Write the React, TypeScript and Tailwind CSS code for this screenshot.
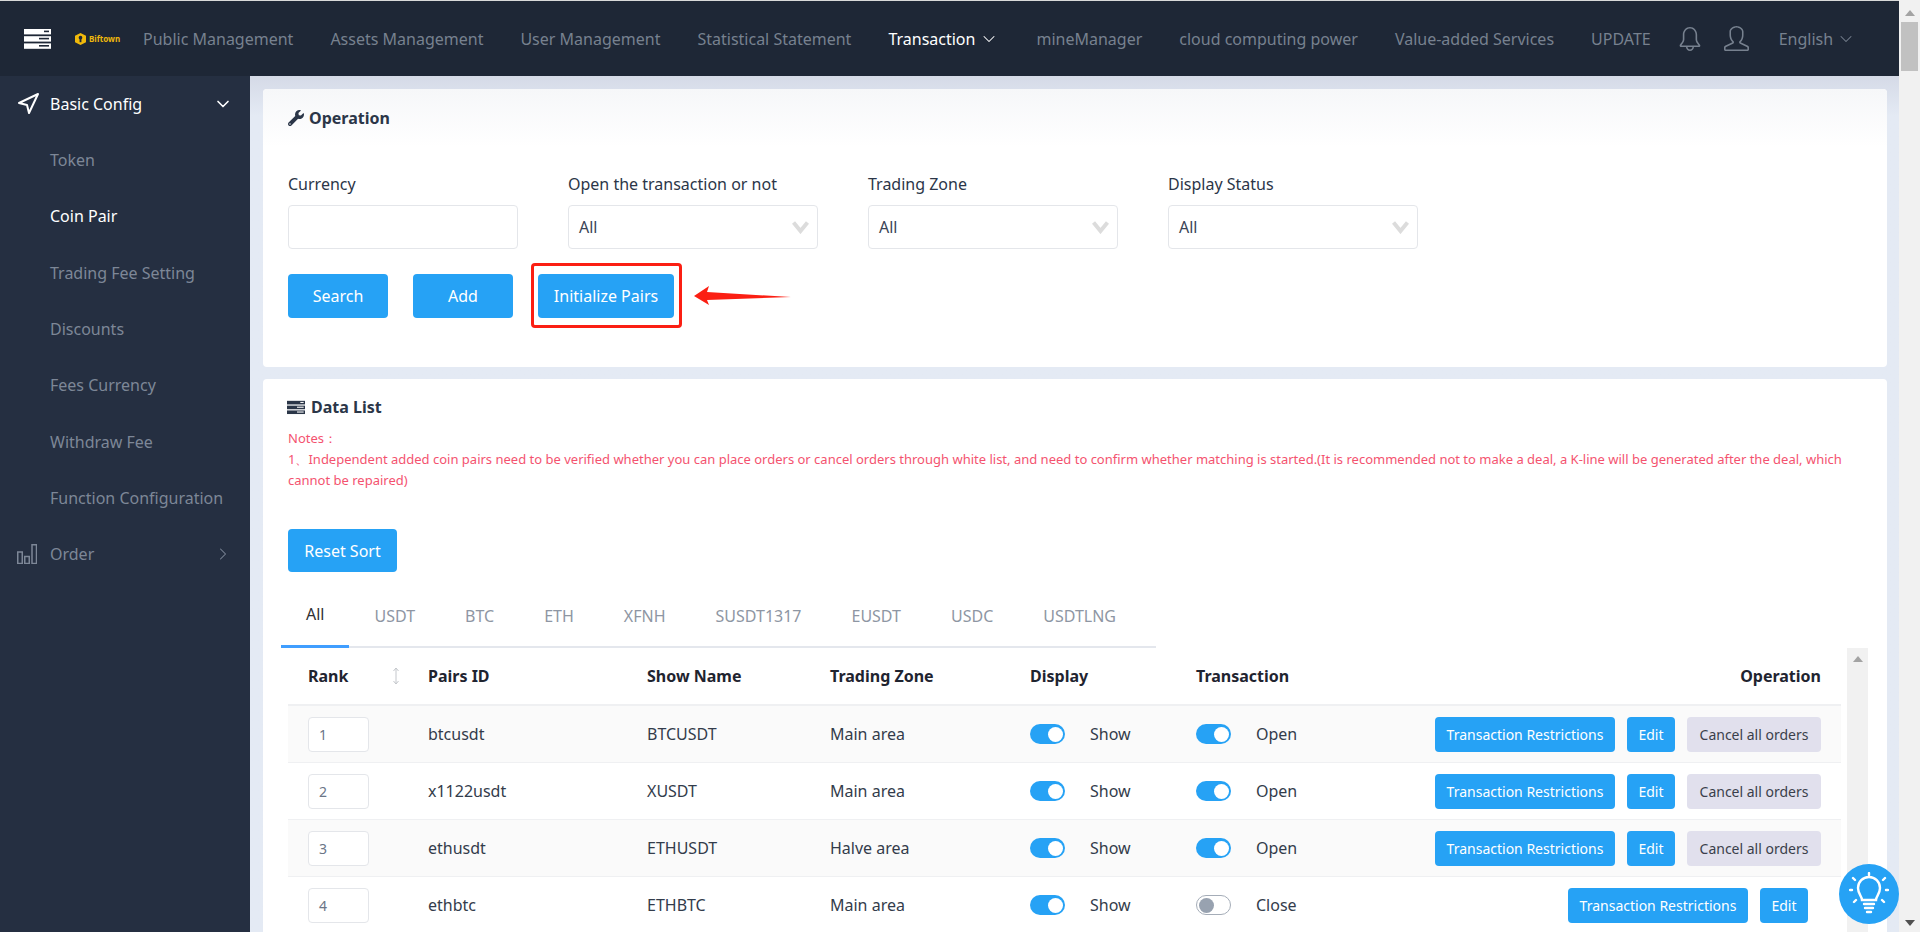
import { Bell, ChevronDown, ChevronRight, Navigation } from "lucide-react";
import { FaWrench } from "react-icons/fa";
import { SlBell, SlUser } from "react-icons/sl";

const navItems = [
  "Public Management",
  "Assets Management",
  "User Management",
  "Statistical Statement",
];

const navItems2 = ["mineManager", "cloud computing power", "Value-added Services", "UPDATE"];

const sideItems = [
  "Token",
  "Coin Pair",
  "Trading Fee Setting",
  "Discounts",
  "Fees Currency",
  "Withdraw Fee",
  "Function Configuration",
];

const tabs = ["All", "USDT", "BTC", "ETH", "XFNH", "SUSDT1317", "EUSDT", "USDC", "USDTLNG"];

const rows = [
  { rank: 1, id: "btcusdt", name: "BTCUSDT", zone: "Main area", on: true },
  { rank: 2, id: "x1122usdt", name: "XUSDT", zone: "Main area", on: true },
  { rank: 3, id: "ethusdt", name: "ETHUSDT", zone: "Halve area", on: true },
  { rank: 4, id: "ethbtc", name: "ETHBTC", zone: "Main area", on: false },
];

const gridCols = "grid grid-cols-[140px_219px_183px_200px_166px_204px_1fr]";

function ServerIcon({ className, slot }: { className: string; slot: string }) {
  return (
    <svg viewBox="0 0 27 20" className={className}>
      <rect x="0" y="0" width="27" height="5.4" fill="currentColor" />
      <rect x="0" y="7.2" width="27" height="5.4" fill="currentColor" />
      <rect x="0" y="14.4" width="27" height="5.4" fill="currentColor" />
      <rect x="20" y="1.6" width="5" height="1.6" fill={slot} />
      <rect x="15" y="8.8" width="10" height="1.6" fill={slot} />
      <rect x="15" y="16" width="10" height="1.6" fill={slot} />
    </svg>
  );
}

function SelectBox({ label, width }: { label: string; width: string }) {
  return (
    <div className={`flex flex-col ${width}`}>
      <label className="text-[16px] leading-[24px] text-[#2b3648]">{label}</label>
      <div className="mt-[9px] flex h-[44px] items-center justify-between rounded-[4px] border border-[#e4e6ea] bg-white pl-[10px] pr-[8px] text-[16px] text-[#3a4456]">
        <span>All</span>
        <svg viewBox="0 0 17 13" className="h-[13px] w-[17px]">
          <polyline points="1.5,1.5 8.5,10 15.5,1.5" fill="none" stroke="#dcdcdc" strokeWidth="4" />
        </svg>
      </div>
    </div>
  );
}

function Toggle({ on }: { on: boolean }) {
  if (on) {
    return (
      <span className="flex h-[20px] w-[35px] items-center justify-end rounded-full bg-[#26a2f5] pr-[2px]">
        <span className="h-[15px] w-[15px] rounded-full bg-white" />
      </span>
    );
  }
  return (
    <span className="flex h-[20px] w-[35px] items-center rounded-full border border-[#a5adb8] bg-white pl-[2px]">
      <span className="h-[15px] w-[15px] rounded-full bg-[#98a2b0]" />
    </span>
  );
}

function BlueButton({ children, className }: { children: string; className: string }) {
  return (
    <button className={`rounded-[4px] bg-[#26a2f5] text-white ${className}`}>{children}</button>
  );
}

export default function App() {
  return (
    <div
      className="flex h-[932px] w-[1920px] overflow-hidden bg-[#e4eaf4] text-[16px]"
      style={{ fontFamily: '"Noto Sans", sans-serif' }}
    >
      <div className="flex w-[1899px] flex-col">
        <div className="h-px bg-[#d9d9d9]" />
        <header className="flex h-[75px] shrink-0 items-center bg-[#1e2736] text-[#77818f]">
          <ServerIcon className="ml-[24px] h-[20px] w-[27px] text-white" slot="#1e2736" />
          <div className="ml-[24px] flex w-[68px] items-center gap-[3px]">
            <svg viewBox="0 0 12 13" className="h-[12px] w-[11px]">
              <polygon points="6,0 12,3 12,10 6,13 0,10 0,3" fill="#f0b90b" />
              <circle cx="6" cy="5" r="2" fill="#1e2736" />
              <rect x="5" y="6" width="2" height="4" fill="#1e2736" />
            </svg>
            <span className="text-[8px] font-bold text-[#f0b90b]">Biftown</span>
          </div>
          <nav className="flex items-center gap-[37px]">
            {navItems.map((item) => (
              <span key={item}>{item}</span>
            ))}
            <span className="flex items-center gap-[4px] text-white">
              Transaction
              <ChevronDown size={20} strokeWidth={1.25} />
            </span>
            {navItems2.map((item) => (
              <span key={item}>{item}</span>
            ))}
          </nav>
          <SlBell className="ml-[27px]" size={24} />
          <SlUser className="ml-[22px]" size={25} />
          <span className="ml-[30px] flex items-center gap-[3px]">
            English
            <ChevronDown size={20} strokeWidth={1.25} />
          </span>
        </header>

        <div className="flex min-h-0 flex-1">
          <aside className="w-[250px] shrink-0 bg-[#252f41] text-[#7d8797]">
            <div className="flex h-[56px] items-center pl-[16px] pr-[17px] text-white">
              <Navigation size={24} strokeWidth={2} />
              <span className="ml-[10px] flex-1">Basic Config</span>
              <ChevronDown size={20} />
            </div>
            {sideItems.map((item) => (
              <div
                key={item}
                className={`flex h-[56.3px] items-center pl-[50px] ${item === "Coin Pair" ? "text-white" : ""}`}
              >
                {item}
              </div>
            ))}
            <div className="flex h-[56px] items-center pl-[17px] pr-[17px]">
              <svg viewBox="0 0 20 20" className="h-[20px] w-[20px]" fill="none" stroke="currentColor" strokeWidth="1.5">
                <rect x="0.75" y="8" width="4.5" height="11.5" />
                <rect x="7.75" y="12.5" width="4.5" height="7" />
                <rect x="15" y="0.75" width="4.5" height="18.75" />
              </svg>
              <span className="ml-[13px] flex-1">Order</span>
              <ChevronRight size={20} strokeWidth={1.25} />
            </div>
          </aside>

          <main className="min-w-0 flex-1 bg-gradient-to-b from-[#d5dae7] to-[#e4eaf4] to-[40px] pl-[13px] pr-[12px] pt-[13px]">
            <section className="h-[278px] rounded-[4px] bg-white">
              <div className="flex h-[58px] items-center gap-[5px] rounded-t-[4px] bg-gradient-to-b from-[#f6f7f9] to-white pl-[25px] pt-[0px]">
                <FaWrench size={16} className="text-[#2b3648]" />
                <span className="font-bold text-[#2b3648]">Operation</span>
              </div>
              <div className="mt-[25px] flex gap-[50px] pl-[25px]">
                <div className="flex w-[230px] flex-col">
                  <label className="text-[16px] leading-[24px] text-[#2b3648]">Currency</label>
                  <input className="mt-[9px] h-[44px] rounded-[4px] border border-[#e4e6ea] bg-white" />
                </div>
                <SelectBox label="Open the transaction or not" width="w-[250px]" />
                <SelectBox label="Trading Zone" width="w-[250px]" />
                <SelectBox label="Display Status" width="w-[250px]" />
              </div>
              <div className="mt-[25px] flex items-center gap-[25px] pl-[25px]">
                <BlueButton className="h-[44px] w-[100px]">Search</BlueButton>
                <BlueButton className="h-[44px] w-[100px]">Add</BlueButton>
                <BlueButton className="h-[44px] w-[136px]">Initialize Pairs</BlueButton>
                <svg viewBox="0 0 98 20" className="ml-[-5px] h-[20px] w-[98px]">
                  <polygon points="0,10 15,0 13,6 97,11 13,14 15,19" fill="#fb1f13" />
                </svg>
              </div>
            </section>

            <section className="relative mt-[12px] h-[600px] rounded-[4px] bg-white">
              <div className="flex items-center gap-[6px] pl-[24px] pt-[16px] text-[#2b3648]">
                <ServerIcon className="h-[15px] w-[18px]" slot="#ffffff" />
                <span className="font-bold leading-[24px]">Data List</span>
              </div>
              <div className="mt-[9px] pl-[25px] pr-[25px] text-[13px] leading-[21px] text-[#f4536f]">
                <p>Notes：</p>
                <p>
                  1、Independent added coin pairs need to be verified whether you can place orders or cancel orders
                  through white list, and need to confirm whether matching is started.(It is recommended not to make a
                  deal, a K-line will be generated after the deal, which cannot be repaired)
                </p>
              </div>
              <BlueButton className="ml-[25px] mt-[38px] h-[43px] w-[109px]">Reset Sort</BlueButton>

              <div className="ml-[18px] mt-[11px] flex h-[65px] w-[875px] border-b-2 border-[#e4e7ed]">
                {tabs.map((tab, i) => (
                  <div
                    key={tab}
                    className={`-mb-[2px] flex h-[65px] items-center px-[25px] ${
                      i === 0 ? "border-b-[3px] border-[#409eff] text-[#303133]" : "text-[#8e96a3]"
                    }`}
                  >
                    {tab}
                  </div>
                ))}
              </div>

              <div className="flex pl-[25px]">
                <div className="w-[1553px] text-[#333c4b]">
                  <div className={`${gridCols} h-[58px] items-center border-b-2 border-[#eff0f2] font-bold text-[#1f2430]`}>
                    <div className="flex items-center justify-between pl-[20px] pr-[28px]">
                      <span>Rank</span>
                      <svg viewBox="0 0 8 18" className="h-[18px] w-[8px]" fill="none" stroke="#c4c7cc" strokeWidth="1">
                        <path d="M4 1v16M1.5 4 4 1l2.500 3M1.500 14 4 17l2.500-3" />
                      </svg>
                    </div>
                    <div>Pairs ID</div>
                    <div>Show Name</div>
                    <div>Trading Zone</div>
                    <div>Display</div>
                    <div>Transaction</div>
                    <div className="pr-[20px] text-right">Operation</div>
                  </div>
                  {rows.map((row) => (
                    <div
                      key={row.rank}
                      className={`${gridCols} h-[57px] items-center border-b border-[#eff0f2] ${
                        row.rank % 2 === 1 ? "bg-[#fafafa]" : "bg-white"
                      }`}
                    >
                      <div className="pl-[20px]">
                        <div className="flex h-[35px] w-[61px] items-center rounded-[4px] border border-[#e4e6ea] bg-white pl-[10px] text-[14px] text-[#6b7587]">
                          {row.rank}
                        </div>
                      </div>
                      <div>{row.id}</div>
                      <div>{row.name}</div>
                      <div>{row.zone}</div>
                      <div className="flex items-center gap-[25px]">
                        <Toggle on />
                        <span>Show</span>
                      </div>
                      <div className="flex items-center gap-[25px]">
                        <Toggle on={row.on} />
                        <span>{row.on ? "Open" : "Close"}</span>
                      </div>
                      <div className="flex items-center justify-end gap-[12px] pr-[20px] text-[14px]">
                        {row.on ? (
                          <>
                            <BlueButton className="h-[35px] w-[180px]">Transaction Restrictions</BlueButton>
                            <BlueButton className="h-[35px] w-[48px]">Edit</BlueButton>
                            <button className="h-[35px] w-[134px] rounded-[4px] bg-[#e1e0ed] text-[#3a3f4b]">
                              Cancel all orders
                            </button>
                          </>
                        ) : (
                          <div className="mr-[13px] flex gap-[12px]">
                            <BlueButton className="h-[35px] w-[180px]">Transaction Restrictions</BlueButton>
                            <BlueButton className="h-[35px] w-[48px]">Edit</BlueButton>
                          </div>
                        )}
                      </div>
                    </div>
                  ))}
                </div>
                <div className="ml-[6px] flex h-[300px] w-[21px] flex-col items-center bg-[#f1f1f1] pt-[8px]">
                  <span className="h-0 w-0 border-x-[5px] border-b-[6px] border-x-transparent border-b-[#a3a3a3]" />
                </div>
              </div>
            </section>
          </main>
        </div>
      </div>

      <div className="flex w-[21px] flex-col items-center justify-between bg-[#f1f1f1] pb-[6px] pt-[10px]">
        <span className="h-0 w-0 border-x-[5px] border-b-[6px] border-x-transparent border-b-[#a3a3a3]" />
        <span className="absolute left-[1901px] top-[22px] h-[49px] w-[17px] bg-[#c1c1c1]" />
        <span className="h-0 w-0 border-x-[5px] border-t-[6px] border-x-transparent border-t-[#505050]" />
      </div>

      <div className="absolute left-[1839px] top-[864px] flex h-[60px] w-[60px] items-center justify-center rounded-full bg-[#26a2f5]">
        <svg viewBox="0 0 40 44" className="h-[44px] w-[40px]" fill="none" stroke="white" strokeWidth="2.4" strokeLinecap="round">
          <path d="M13 28c0-4-4-6-4-12a11 11 0 0 1 22 0c0 6-4 8-4 12z" />
          <path d="M15 32h10M16 36h8M18 40h4" />
          <path d="M20 1v2M4 6l2 2M36 6l-2 2M1 18h2M37 18h2M5 30l2-2M35 30l-2-2" />
        </svg>
      </div>

      <div className="absolute left-[531px] top-[263px] h-[65px] w-[151px] rounded-[4px] border-[3px] border-[#fb1f13]" />
    </div>
  );
}
